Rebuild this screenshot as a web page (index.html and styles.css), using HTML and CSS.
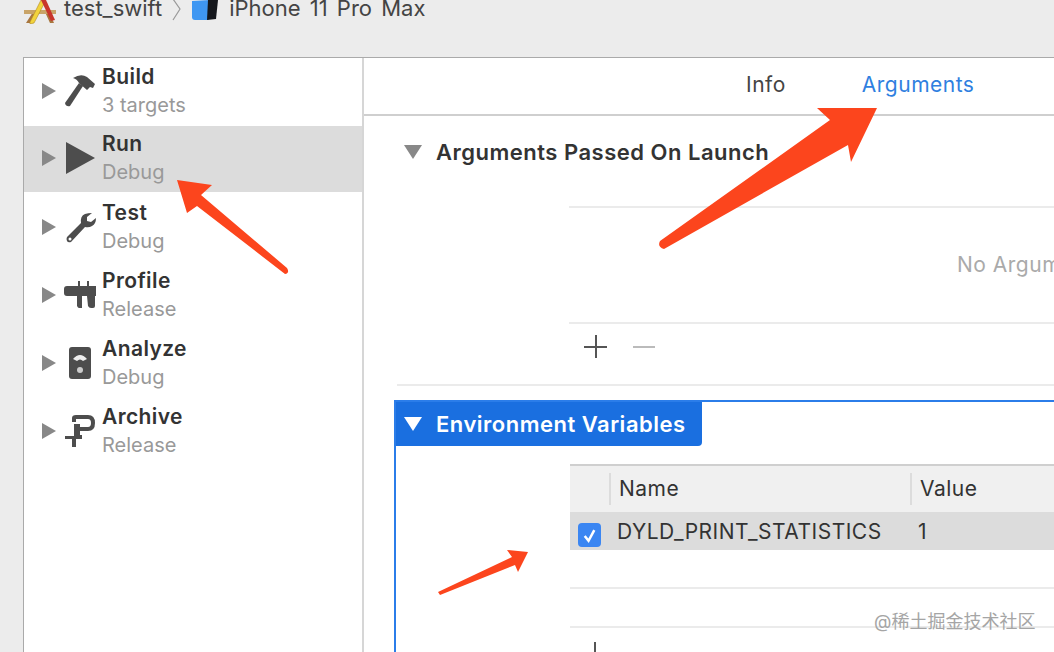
FILE: index.html
```html
<!DOCTYPE html>
<html lang="en">
<head>
    <meta charset="UTF-8">
    <meta name="viewport" content="width=device-width, initial-scale=1.0">
    <title>Scheme Editor</title>
    <link rel="stylesheet" href="styles.css">
</head>
<body>
    <!-- Scheme bar, cut off by the top of the picture -->
    <div class="scheme-bar">
        <svg class="xcode-icon" viewBox="0 0 32 24" width="32" height="24">
            <path d="M2 23l7-11h4l-7 11zM30 23l-5-11h-4l5 11z" fill="#a8763f"/>
            <path d="M0 10h32v4H0z" fill="#c9a468"/>
            <path d="M6 22L17 0l4 2-11 21-4 1z" fill="#f2d33c" stroke="#b08a20" stroke-width=".6"/>
            <path d="M17 0h5l9 20-4 1z" fill="#c8352b"/>
        </svg>
        <span class="scheme-name">test_swift</span>
        <svg class="crumb" viewBox="0 0 9 24" width="9" height="24">
            <path d="M1 1l7 10-7 11" fill="none" stroke="#999" stroke-width="1.2"/>
        </svg>
        <svg class="device-icon" viewBox="0 0 28 22" width="28" height="22">
            <path d="M1 1l18-1v17q0 3-3 3H4q-3 0-3-3z" fill="#3f97f2"/>
            <path d="M17 0h10l-2 19-9 1z" fill="#15171c"/>
        </svg>
        <span class="scheme-name">iPhone 11 Pro Max</span>
    </div>

    <div class="panel">
        <!-- Scheme actions -->
        <ul class="sidebar">
            <li class="action">
                <span class="disclosure"></span>
                <svg class="action-icon" viewBox="0 0 32 32">
                    <path d="M1 28l14-20 4 3L6 31q-4 1-5-3z" fill="#4d4d4d"/>
                    <path d="M9 3q8-5 14-1l8 7-2 4-3-1-3 3-8-7q-2-4-6-5z" fill="#4d4d4d"/>
                </svg>
                <div class="action-text"><b>Build</b><small>3 targets</small></div>
            </li>
            <li class="action selected">
                <span class="disclosure"></span>
                <svg class="action-icon" viewBox="0 0 32 32">
                    <path d="M2 0l29 16L2 32z" fill="#4d4d4d"/>
                </svg>
                <div class="action-text"><b>Run</b><small>Debug</small></div>
            </li>
            <li class="action">
                <span class="disclosure"></span>
                <svg class="action-icon" viewBox="0 0 32 32">
                    <path d="M3 26l14-14q-1-7 4-9 3-1 7-1l-5 4v4l4 1 5-4q0 6-4 8-3 2-7 1L7 31q-3 1-4-1-1-2 0-4z" fill="#4d4d4d"/>
                    <circle cx="6" cy="28" r="1.500" fill="#fff"/>
                </svg>
                <div class="action-text"><b>Test</b><small>Debug</small></div>
            </li>
            <li class="action">
                <span class="disclosure"></span>
                <svg class="action-icon" viewBox="0 0 32 32">
                    <path d="M0 10q0-3 3-3h11V2h2v5h7V2h2v5h7v10h-1v10q0 2-2 2h-2q-2 0-3-2l-1-10h-5v12h-3q-1 0-2-2V17H3q-3 0-3-3z" fill="#4d4d4d"/>
                </svg>
                <div class="action-text"><b>Profile</b><small>Release</small></div>
            </li>
            <li class="action">
                <span class="disclosure"></span>
                <svg class="action-icon" viewBox="0 0 32 32">
                    <rect x="5" y="0" width="22" height="32" rx="3" fill="#4d4d4d"/>
                    <path d="M9 12q7-8 14 0l-4 2q-3-3-6 0z" fill="#eee"/>
                    <circle cx="16" cy="23" r="3" fill="#ccc"/>
                </svg>
                <div class="action-text"><b>Analyze</b><small>Debug</small></div>
            </li>
            <li class="action">
                <span class="disclosure"></span>
                <svg class="action-icon" viewBox="0 0 32 32">
                    <path d="M8 3q0-3 4-3h12q7 0 7 8t-7 8h-8v-4h8q3 0 3-4t-3-4H12v3H8z" fill="#4d4d4d"/>
                    <path d="M10 9h6v11h2v4h-6v8h-4v-8H1v-3h9z" fill="#4d4d4d"/>
                </svg>
                <div class="action-text"><b>Archive</b><small>Release</small></div>
            </li>
        </ul>

        <div class="content">
            <div class="tabs">
                <span class="tab">Info</span>
                <span class="tab active">Arguments</span>
            </div>

            <!-- Arguments section -->
            <div class="section-head">
                <span class="arrow-down"></span>
                <span>Arguments Passed On Launch</span>
            </div>
            <div class="args-list">
                <span class="empty-note">No Arguments</span>
            </div>
            <div class="list-tools">
                <span class="plus"></span>
                <span class="minus"></span>
            </div>
            <div class="divider"></div>

            <!-- Environment section -->
            <div class="env-box">
                <div class="env-head">
                    <span class="arrow-down white"></span>
                    <span>Environment Variables</span>
                </div>
                <div class="env-table">
                    <div class="env-row header">
                        <div class="cell check-col"></div>
                        <div class="cell name-col">Name</div>
                        <div class="cell value-col">Value</div>
                    </div>
                    <div class="env-row picked">
                        <div class="cell check-col">
                            <span class="checkbox">
                                <svg viewBox="0 0 24 24" width="23" height="24">
                                    <path d="M7 13l4 5 6-11" fill="none" stroke="#fff" stroke-width="2.600"/>
                                </svg>
                            </span>
                        </div>
                        <div class="cell name-col">DYLD_PRINT_STATISTICS</div>
                        <div class="cell value-col">1</div>
                    </div>
                    <div class="env-row blank"></div>
                    <div class="env-row blank"></div>
                    <div class="list-tools inner">
                        <span class="plus"></span>
                    </div>
                </div>
            </div>
        </div>
    </div>

    <!-- Annotation arrows drawn over the screenshot -->
    <svg class="annotations" viewBox="0 0 1054 652" width="1054" height="652">
        <path d="M177 180L212 185 201 195 287 268Q290 273 285 274L197 206 187 213z" fill="#fc451d"/>
        <path d="M877 108L817 108 830 120 660 241Q657 247 664 249L848 145 851 162z" fill="#fc451d"/>
        <path d="M528 552L507 550 512 557 438 592 440 595 515 565 518 572z" fill="#fc451d"/>
    </svg>
    <div class="watermark">@稀土掘金技术社区</div>
</body>
</html>
```

FILE: styles.css
```css
body {
    font-family: Inter, "Noto Sans CJK SC", sans-serif;
    background-color: #ececec;
    color: #333;
    margin: 0;
    width: 1054px;
    height: 652px;
    overflow: hidden;
    position: relative;
}

.scheme-bar {
    height: 57px;
    padding-left: 24px;
    box-sizing: border-box;
    display: flex;
    align-items: flex-start;
}

.xcode-icon {
    margin-right: 8px;
}

.scheme-name {
    font-size: 22px;
    line-height: 22px;
    word-spacing: 3px;
    margin-top: -3px;
    color: #444;
}

.crumb {
    margin: -2px 10px 0 10px;
}

.device-icon {
    margin: 0 10px 0 0;
}

.panel {
    display: flex;
    height: 595px;
    margin-left: 23px;
    background-color: #fff;
    border-top: 1px solid #aaa;
    border-left: 1px solid #aaa;
    box-sizing: border-box;
    overflow: hidden;
}

/* Sidebar */
.sidebar {
    list-style: none;
    margin: 0;
    padding: 0;
    width: 338px;
    flex-shrink: 0;
    border-right: 2px solid #d6d6d6;
}

.action {
    display: flex;
    align-items: center;
    height: 68px;
    padding: 0 0 3px 18px;
    box-sizing: border-box;
}

.action.selected {
    background-color: #dcdcdc;
    height: 66px;
    margin-bottom: 2px;
}

.disclosure {
    width: 0;
    height: 0;
    border-left: 14px solid #888;
    border-top: 8px solid transparent;
    border-bottom: 8px solid transparent;
    margin-right: 8px;
}

.action-icon {
    width: 32px;
    height: 32px;
    margin-right: 6px;
}

.action-text b {
    display: block;
    font-size: 21px;
    line-height: 29px;
    font-weight: 600;
    letter-spacing: .4px;
    color: #333;
}

.action-text small {
    display: block;
    font-size: 20px;
    line-height: 29px;
    color: #999;
}

/* Right side */
.content {
    flex: 1;
    min-width: 0;
}

.tabs {
    height: 52px;
    padding: 0 0 4px 382px;
    border-bottom: 2px solid #cfcfcf;
    display: flex;
    align-items: center;
    gap: 76px;
    font-size: 21px;
    letter-spacing: .5px;
}

.tab {
    color: #444;
}

.tab.active {
    color: #2f7fe0;
}

.section-head {
    display: flex;
    align-items: center;
    height: 72px;
    margin-bottom: 18px;
    padding-left: 40px;
    font-size: 22px;
    font-weight: 600;
    letter-spacing: .5px;
    gap: 14px;
}

.arrow-down {
    width: 0;
    height: 0;
    border-top: 14px solid #888;
    border-left: 9px solid transparent;
    border-right: 9px solid transparent;
}

.arrow-down.white {
    border-top-color: #fff;
}

.args-list {
    margin-left: 205px;
    height: 112px;
    padding: 0 0 2px 388px;
    border-top: 2px solid #ebebeb;
    border-bottom: 2px solid #ebebeb;
    display: flex;
    align-items: center;
    white-space: nowrap;
    font-size: 21px;
    letter-spacing: .5px;
    color: #aaa;
}

.list-tools {
    margin-left: 205px;
    height: 45px;
    padding-left: 15px;
    display: flex;
    align-items: center;
    gap: 26px;
}

.plus {
    width: 23px;
    height: 23px;
    background:
        linear-gradient(#555, #555) center / 23px 2px no-repeat,
        linear-gradient(#555, #555) center / 2px 23px no-repeat;
}

.minus {
    width: 22px;
    height: 2px;
    background-color: #bbb;
}

.divider {
    margin: 15px 0 14px 33px;
    height: 2px;
    background-color: #ebebeb;
}

.env-box {
    margin-left: 30px;
    height: 252px;
    box-sizing: border-box;
    border-top: 2px solid #2b7de9;
    border-left: 2px solid #2b7de9;
    overflow: hidden;
}

.env-head {
    display: flex;
    align-items: center;
    width: 306px;
    height: 44px;
    padding-left: 8px;
    box-sizing: border-box;
    gap: 14px;
    background-color: #1a6fe0;
    color: #fff;
    font-size: 22px;
    font-weight: 600;
    letter-spacing: .5px;
    border-radius: 0 0 4px 0;
}

.env-table {
    margin: 18px 0 0 174px;
    font-size: 21px;
    letter-spacing: .5px;
}

.env-row {
    display: flex;
    align-items: center;
}

.env-row.header {
    height: 46px;
    background-color: #f0f0f0;
    border-top: 2px solid #cfcfcf;
}

.env-row.picked {
    height: 38px;
    background-color: #dcdcdc;
}

.env-row.blank {
    height: 37px;
    border-bottom: 2px solid #ebebeb;
}

.cell {
    white-space: nowrap;
}

.check-col {
    width: 39px;
    display: flex;
    padding-left: 8px;
    box-sizing: border-box;
}

.name-col {
    width: 301px;
    padding-left: 8px;
    box-sizing: border-box;
}

.value-col {
    padding-left: 8px;
}

.header .name-col,
.header .value-col {
    border-left: 2px solid #dcdcdc;
    line-height: 32px;
}

.checkbox {
    width: 23px;
    height: 24px;
    border-radius: 4px;
    background-color: #3b86f2;
    display: block;
    margin-top: 7px;
}

.list-tools.inner {
    margin-left: 0;
    padding-left: 13px;
    height: 50px;
}

/* Overlays */
.annotations {
    position: absolute;
    left: 0;
    top: 0;
}

.watermark {
    position: absolute;
    left: 874px;
    top: 611px;
    font-size: 18px;
    line-height: 22px;
    color: #a5a5a5;
    white-space: nowrap;
}
```
